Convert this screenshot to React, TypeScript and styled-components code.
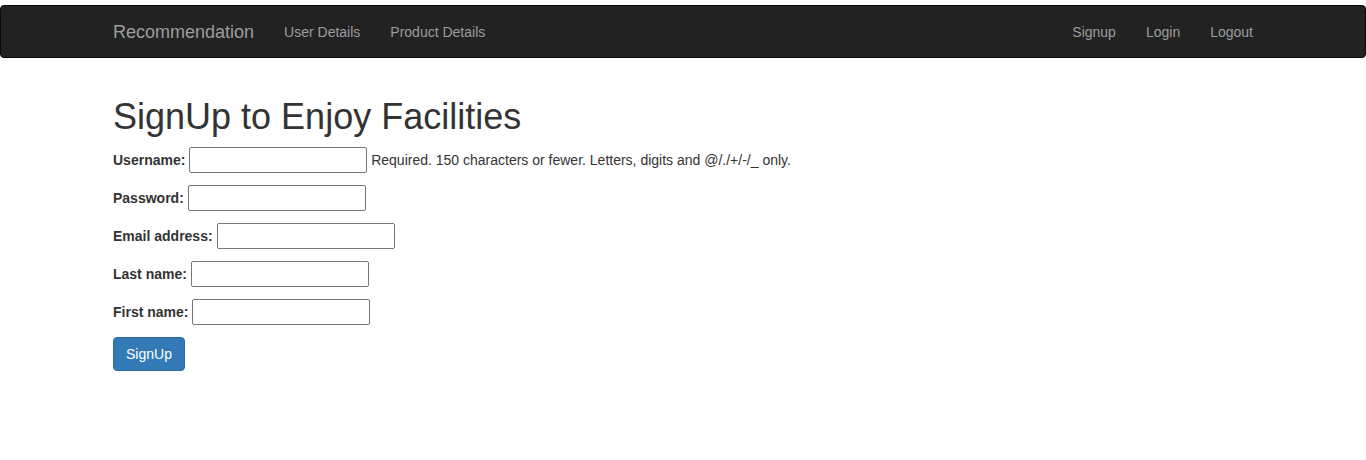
import React from "react";
import styled, { createGlobalStyle } from "styled-components";

const GlobalStyle = createGlobalStyle`
  html, body {
    margin: 0;
    padding: 0;
    background: #ffffff;
  }
  body {
    font-family: "Liberation Sans", Arial, Helvetica, sans-serif;
    font-size: 14px;
    line-height: 1.42857143;
    color: #333333;
  }
  * {
    box-sizing: border-box;
  }
`;

type Field = {
  id: string;
  label: string;
  type: string;
  width: number;
  help?: string;
};

const fields: Field[] = [
  {
    id: "username",
    label: "Username:",
    type: "text",
    width: 178,
    help: "Required. 150 characters or fewer. Letters, digits and @/./+/-/_ only.",
  },
  { id: "password", label: "Password:", type: "password", width: 178 },
  { id: "email", label: "Email address:", type: "email", width: 178 },
  { id: "last_name", label: "Last name:", type: "text", width: 178 },
  { id: "first_name", label: "First name:", type: "text", width: 178 },
];

function App() {
  return (
    <Page>
      <GlobalStyle />
      <Navbar>
        <Container>
          <NavLeft>
            <Brand href="#">Recommendation</Brand>
            <NavList>
              <NavItem href="#">User Details</NavItem>
              <NavItem href="#">Product Details</NavItem>
            </NavList>
          </NavLeft>
          <NavList $right>
            <NavItem href="#">Signup</NavItem>
            <NavItem href="#">Login</NavItem>
            <NavItem href="#">Logout</NavItem>
          </NavList>
        </Container>
      </Navbar>

      <Main>
        <Title>SignUp to Enjoy Facilities</Title>
        <form onSubmit={(e) => e.preventDefault()}>
          {fields.map((f) => (
            <FormRow key={f.id}>
              <Label htmlFor={f.id}>{f.label}</Label>{" "}
              <Input id={f.id} type={f.type} $width={f.width} />
              {f.help && (
                <>
                  {" "}
                  <HelpText>{f.help}</HelpText>
                </>
              )}
            </FormRow>
          ))}
          <SubmitButton type="submit">SignUp</SubmitButton>
        </form>
      </Main>
    </Page>
  );
}

const Page = styled.div`
  padding-top: 5px;
  min-height: 460px;
`;

const Navbar = styled.nav`
  height: 53px;
  background-color: #222222;
  border: 1px solid #080808;
  border-radius: 4px;
  margin-bottom: 19px;
`;

const Container = styled.div`
  width: 1170px;
  margin: 0 auto;
  padding: 0 15px;
  height: 100%;
  display: flex;
  justify-content: space-between;
  align-items: stretch;
`;

const NavLeft = styled.div`
  display: flex;
  align-items: stretch;
`;

const Brand = styled.a`
  margin-left: -15px;
  padding: 16px 15px 15px;
  font-size: 18px;
  line-height: 20px;
  color: #9d9d9d;
  text-decoration: none;
`;

const NavList = styled.div<{ $right?: boolean }>`
  display: flex;
  align-items: stretch;
  margin-right: ${(p) => (p.$right ? "-15px" : "0")};
`;

const NavItem = styled.a`
  padding: 16px 15px 15px;
  font-size: 14px;
  line-height: 20px;
  color: #9d9d9d;
  text-decoration: none;
`;

const Main = styled.main`
  display: flow-root;
  width: 1170px;
  margin: 0 auto;
  padding: 0 15px;
`;

const Title = styled.h1`
  font-size: 36px;
  font-weight: 500;
  line-height: 1.1;
  margin: 20px 0 10px;
  color: #333333;
`;

const FormRow = styled.p`
  margin: 0 0 10px;
`;

const Label = styled.label`
  display: inline-block;
  max-width: 100%;
  font-weight: 700;
  margin-bottom: 5px;
`;

const Input = styled.input<{ $width: number }>`
  width: ${(p) => p.$width}px;
  height: 26px;
  margin: 0;
  padding: 1px 2px;
  border: 1px solid #767676;
  border-radius: 2px;
  font: inherit;
  color: #333333;
  background: #ffffff;
  vertical-align: baseline;
`;

const HelpText = styled.span`
  color: #333333;
`;

const SubmitButton = styled.button`
  display: inline-block;
  padding: 6px 12px;
  font-family: inherit;
  font-size: 14px;
  line-height: 20px;
  color: #ffffff;
  background-color: #337ab7;
  border: 1px solid #2e6da4;
  border-radius: 4px;
  cursor: pointer;
`;

export default App;
